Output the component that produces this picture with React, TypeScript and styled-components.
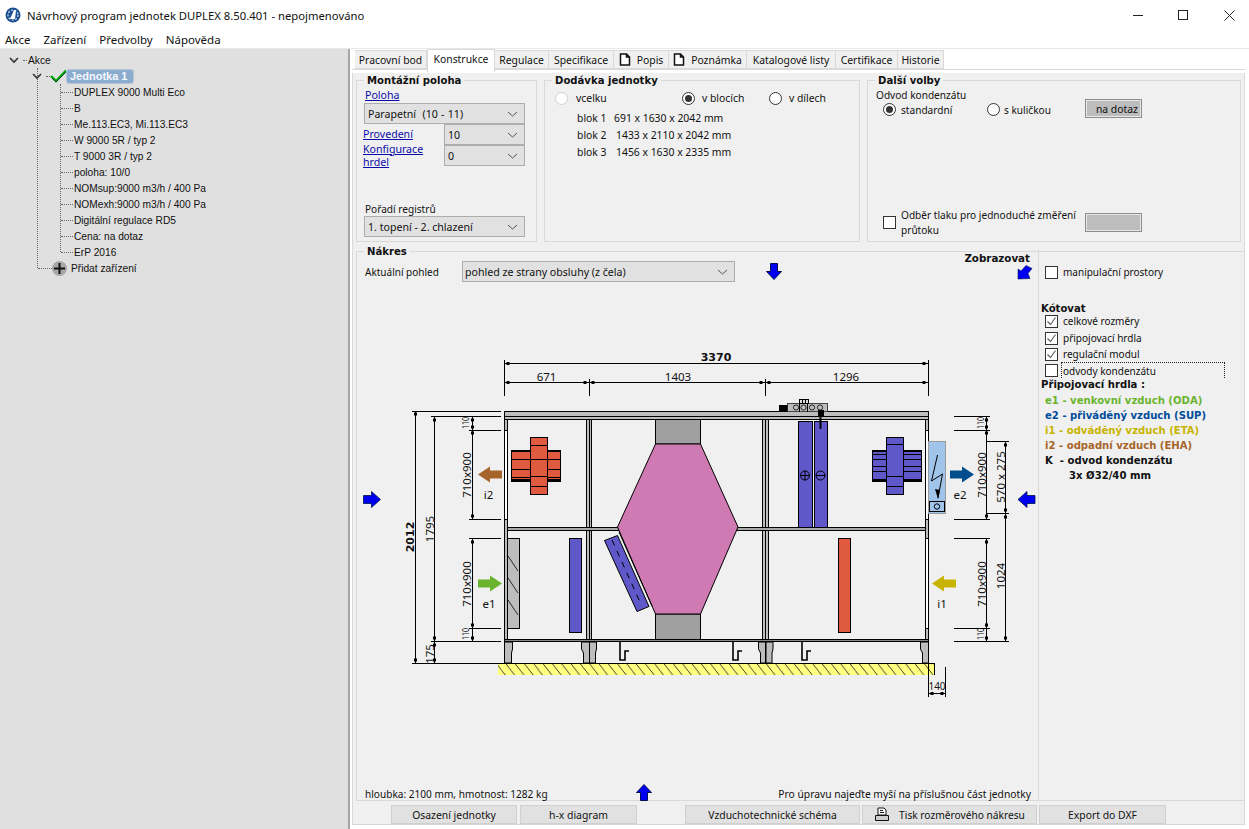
import React from "react";
import styled, { createGlobalStyle } from "styled-components";

const Global = createGlobalStyle`
  html, body { margin: 0; padding: 0; background: #fff; overflow: hidden; }
  body { font-family: "Noto Sans", "Liberation Sans", sans-serif; font-size: 11px; color: #000; }
  * { box-sizing: border-box; }
`;

const Win = styled.div`width: 1249px; height: 829px; display: flex; flex-direction: column; background: #fff; overflow: hidden;`;
const TitleBar = styled.div`height: 30px; display: flex; align-items: center; padding-left: 5px; flex: none; margin-right: -3px;`;
const TitleText = styled.span`font-size: 11.27px; margin-left: 6px; color: #111; flex: 1;`;
const WinBtn = styled.div`width: 45.5px; height: 30px; display: flex; align-items: center; justify-content: center;`;
const MenuBar = styled.div`height: 19px; display: flex; padding-left: 5px; gap: 13px; font-size: 11.5px; align-items: center; flex: none; border-bottom: 1px solid #e8e8e8;`;
const MenuItem = styled.span`color: #111;`;
const Body = styled.div`flex: 1; display: flex; min-height: 0;`;

const Sidebar = styled.div`width: 350px; flex: none; background: #e0e0e0; border-right: 2px solid #a6a6a6; padding-top: 3px; font-family: "Liberation Sans", sans-serif; font-size: 10.2px; color: #111;`;
const TreeRow = styled.div<{ $pl: number }>`height: 16px; display: flex; align-items: center; padding-left: ${p => p.$pl}px; position: relative;`;
const Outer = styled.div`position: relative;
  &::before { content: ""; position: absolute; left: 37px; top: 0; bottom: 8px; border-left: 1px dotted #666; }
`;
const Children = styled.div`position: relative;
  &::before { content: ""; position: absolute; left: 60px; top: 0; bottom: 8px; border-left: 1px dotted #666; }
`;
const Leaf = styled(TreeRow)`
  &::before { content: ""; position: absolute; left: 61px; width: 12px; top: 8px; border-top: 1px dotted #666; }
`;
const AddRow = styled(TreeRow)`
  &::before { content: ""; position: absolute; left: 38px; width: 14px; top: 8px; border-top: 1px dotted #666; }
`;
const Chip = styled.span`background: #8caccd; color: #f4f8ff; font-weight: 700; font-size: 11px; border: 1px solid #b4c6da; border-radius: 3px; padding: 0 3px; height: 15px; line-height: 13px; margin-left: -1px; width: 68px; white-space: nowrap;`;
const Dots = styled.span`width: 4px; border-top: 1px dotted #666; margin: 0 1px 0 4px;`;
const PlusBall = styled.span`width: 15px; height: 15px; border-radius: 50%; background: #a8a8a8; margin-right: 4px; display: flex; align-items: center; justify-content: center; position: relative; z-index: 1;`;

const Right = styled.div`flex: 1; min-width: 0; display: flex; flex-direction: column; padding: 0 4px 4px 2px;`;
const TabStrip = styled.div`height: 21px; display: flex; align-items: flex-end; padding-left: 3px; border-bottom: 1px solid #d9d9d9; flex: none; margin-top: 0; position: relative;`;
const Tab = styled.div<{ $w: number; $active?: boolean }>`
  width: ${p => p.$w}px;
  height: ${p => (p.$active ? 23 : 19)}px;
  margin-bottom: ${p => (p.$active ? -3 : 0)}px;
  background: ${p => (p.$active ? "#fff" : "#f0f0f0")};
  border: 1px solid #d9d9d9;
  border-left-width: ${p => (p.$active ? 1 : 0)}px;
  border-bottom: ${p => (p.$active ? "none" : "1px solid #d9d9d9")};
  display: flex; align-items: center; justify-content: center; gap: 6px;
  font-size: 10.4px; color: #111; position: relative; z-index: 1; white-space: nowrap;
  padding-bottom: ${p => (p.$active ? 5 : 0)}px;
`;
const Panel = styled.div`flex: 1; margin-top: 3px; background: #f0f0f0; border: 1px solid #d9d9d9; border-top: none; padding: 0 0 0 3px; display: flex; flex-direction: column; min-height: 0; font-size: 10.6px; color: #111;`;
const TopRow = styled.div`display: flex; height: 170px; gap: 7px; flex: none; padding-right: 3px;`;
const Group = styled.fieldset<{ $w?: number }>`
  margin: 0; min-width: 0; padding: 0; border: 1px solid #d9d9d9;
  ${p => (p.$w ? `width: ${p.$w}px; flex: none;` : "flex: 1;")}
  height: 169px; display: block;
`;
const Legend = styled.legend`
  margin-left: 7px; padding: 0 3px; font-family: "DejaVu Sans", sans-serif; font-weight: 700; font-size: 10.1px; line-height: 14px; color: #111; transform: translateY(1px);
`;
const MountBody = styled.div`padding: 1px 11px 0 7px; display: flex; flex-direction: column;`;
const Link = styled.a`color: #0b0ba8; text-decoration: underline; line-height: 13px; display: block;`;
const LinkRow = styled.div`height: 15px; padding-left: 1px; display: flex; align-items: center;`;
const Select = styled.div<{ $w?: number }>`
  height: 21px; background: #e1e1e1; border: 1px solid #adadad; display: flex; align-items: center; justify-content: space-between; padding: 0 6px 0 3px;
  ${p => (p.$w ? `width: ${p.$w}px; flex: none;` : "")}
  white-space: pre;
`;
const ParapetSelect = styled(Select)`word-spacing: 0.5px;`;
const Pair = styled.div`display: flex; align-items: center; height: 21px; margin-left: -1px; justify-content: space-between;`;
const PlainLabel = styled.div<{ $mt?: number }>`margin-top: ${p => p.$mt ?? 0}px; height: 14px; line-height: 14px; padding-left: 1px; font-size: 10.1px;`;

const DeliveryBody = styled.div`padding: 3px 0 0 10px; font-size: 10.4px;`;
const RadioRow = styled.div`display: flex; align-items: center; height: 16px;`;
const Radio = styled.span<{ $on?: boolean; $off?: boolean; $ml?: number }>`
  width: 13px; height: 13px; border-radius: 50%; flex: none; background: #fff; position: relative;
  margin-left: ${p => p.$ml ?? 0}px;
  border: 1px solid ${p => (p.$off ? "#d0d0d0" : "#333")};
  display: flex; align-items: center; justify-content: center;
  &::after { content: ""; width: 7px; height: 7px; border-radius: 50%; background: ${p => (p.$on ? "#333" : "transparent")}; }
`;
const RadioLabel = styled.span<{ $ml: number; $w?: number }>`margin-left: ${p => p.$ml}px; ${p => (p.$w ? `width: ${p.$w}px;` : "")}`;
const Blocks = styled.div`margin: 5px 0 0 22px; display: flex; flex-direction: column; gap: 3px;`;
const BlockRow = styled.div`height: 14px; line-height: 14px; display: flex;`;
const BlockName = styled.span`width: 37px;`;
const BlockSize = styled.span<{ $ml?: number }>`margin-left: ${p => p.$ml ?? 0}px;`;

const MoreBody = styled.div`padding: 1px 0 0 7px; font-size: 10.1px;`;
const Row = styled.div<{ $ml?: number; $mt?: number }>`display: flex; align-items: center; margin-left: ${p => p.$ml ?? 0}px; margin-top: ${p => p.$mt ?? 0}px;`;
const PriceBox = styled.div<{ $top?: number }>`width: 57px; height: 19px; flex: none; background: #bdbdbd; border: 1px solid #8c8c8c; outline: 1px solid #e8e8e8; outline-offset: -2px; margin-top: ${p => p.$top ?? 0}px; display: flex; align-items: center; justify-content: flex-end; padding-right: 3px; font-size: 10.4px;`;
const Box = styled.span<{ $ml?: number }>`width: 13px; height: 13px; flex: none; background: #fff; border: 1px solid #333; margin-left: ${p => p.$ml ?? 0}px; display: flex; align-items: center; justify-content: center;`;
const TwoLine = styled.span`margin-left: 5px; line-height: 15px; width: 184px; padding-top: 2px;`;

const DrawGroup = styled.fieldset`margin: 0; padding: 0; border: 1px solid #d9d9d9; flex: none; height: 557px; min-width: 0; margin-top: 1px; margin-right: -1px;`;
const DrawGrid = styled.div`display: flex; height: 543px;`;
const DrawLeft = styled.div`width: 681px; flex: none; display: flex; flex-direction: column;`;
const HeadRow = styled.div`display: flex; align-items: center; height: 21px; margin-top: 3px; padding-left: 8px;`;
const HeadLabel = styled.span`width: 97px; font-size: 10px;`;
const ViewSelect = styled(Select)`width: 273px; background: #e1e1e1; padding-left: 2px;`;
const ArrowSlot = styled.span<{ $ml: number }>`margin-left: ${p => p.$ml}px; display: flex; margin-top: -1px;`;
const ShowBlock = styled.div`margin-left: auto; margin-top: -12px; display: flex; flex-direction: column; align-items: flex-end; padding-right: 6px;`;
const ShowTitle = styled.span`font-family: "DejaVu Sans", sans-serif; font-weight: 700; font-size: 10.3px; line-height: 14px; margin-right: 2px;`;
const DiagSlot = styled.span`display: flex; margin-right: -1px;`;
const DrawSvg = styled.svg`flex: none; display: block; margin-top: 7px;`;
const FootRow = styled.div`height: 20px; display: flex; align-items: center; padding: 0 7px 0 8px; font-size: 10.1px;`;
const FootLeft = styled.span`width: 271px; flex: none; padding-top: 3px;`;
const FootRight = styled.span`margin-left: auto; font-size: 10.3px; padding-top: 3px;`;
const DrawRight = styled.div`flex: 1; border-left: 1px solid #d9d9d9; margin-top: -8px; padding: 14px 0 0 6px; font-size: 10px;`;
const CheckRow = styled.div<{ $mt?: number }>`display: flex; align-items: center; height: 16px; margin-top: ${p => p.$mt ?? 0}px; gap: 5px;`;
const Focus = styled.span`border: 1px dotted #222; border-bottom: none; width: 164px; height: 16px; line-height: 16px; margin-left: -2px; padding-left: 1px;`;
const BoldHead = styled.div<{ $mt?: number }>`font-family: "DejaVu Sans", sans-serif; font-weight: 700; font-size: 10.1px; line-height: 15px; margin-left: -4px; margin-top: ${p => p.$mt ?? 0}px;`;
const Key = styled.div<{ $c: string; $ml?: number; $mt?: number }>`font-family: "DejaVu Sans", sans-serif; font-weight: 700; font-size: 10.1px; line-height: 15px; color: ${p => p.$c}; margin-left: ${p => p.$ml ?? 0}px; margin-top: ${p => p.$mt ?? 0}px; white-space: pre;`;

const ButtonRow = styled.div`display: flex; height: 20px; margin-top: 4px; padding-left: 35px; font-size: 10.4px;`;
const Button = styled.div<{ $w: number; $mr?: number }>`width: ${p => p.$w}px; margin-right: ${p => p.$mr ?? 0}px; background: #e1e1e1; border: 1px solid #d0d0d0; display: flex; align-items: center; justify-content: center; gap: 9px; flex: none;`;
const PrintLabel = styled.span`font-size: 10.2px;`;

const Chevron = () => (
  <svg width="11" height="6" viewBox="0 0 11 6"><path d="M1 1l4.5 4L10 1" fill="none" stroke="#555" strokeWidth="1" /></svg>
);
const Expand = () => (
  <svg width="10" height="7" viewBox="0 0 10 7"><path d="M1 1l4 4 4-4" fill="none" stroke="#333" strokeWidth="1.6" /></svg>
);
const DocIcon = () => (
  <svg width="12" height="13" viewBox="0 0 12 13"><path d="M1.5 1h6l3 3v8h-9z M7.5 1v3h3" fill="#fff" stroke="#111" strokeWidth="1.5" /></svg>
);
const TinyCheck = () => (
  <svg width="11" height="11" viewBox="0 0 11 11"><path d="M1.5 5.5l3 3 5-7" fill="none" stroke="#555" strokeWidth="1.1" /></svg>
);
const NavArrow = ({ dir }: { dir: "up" | "down" }) => (
  <svg width="16" height="17" viewBox="0 0 16 17">
    <path d={dir === "down" ? "M4.5.5h7v8h4L8 16.5.5 8.5h4z" : "M4.5 16.5h7v-8h4L8 .5.5 8.5h4z"} fill="#0000f0" stroke="#001050" strokeWidth="1" />
  </svg>
);
const DiagArrow = () => (
  <svg width="16" height="15" viewBox="0 0 16 15">
    <path d="M1 14V4l3 2 5-5.500 6 3-4 5 2 5z" fill="#0000f0" stroke="#001050" strokeWidth=".6" />
  </svg>
);

const K = "#000";
const GRAY = "#bdbdbd";
const H = ({ x1, x2, y }: { x1: number; x2: number; y: number }) => <line x1={x1} x2={x2} y1={y} y2={y} stroke={K} strokeWidth="1" shapeRendering="crispEdges" />;
const V = ({ x, y1, y2 }: { x: number; y1: number; y2: number }) => <line x1={x} x2={x} y1={y1} y2={y2} stroke={K} strokeWidth="1" shapeRendering="crispEdges" />;
const Dot = ({ x, y }: { x: number; y: number }) => <rect x={x - 1.5} y={y - 1.5} width="3" height="3" fill={K} />;
const DimT = ({ x, y, t, rot, bold, size = 11.5, sx = 1 }: { x: number; y: number; t: string; rot?: boolean; bold?: boolean; size?: number; sx?: number }) => (
  <text
    transform={`translate(${x} ${y})${rot ? " rotate(-90)" : ""} scale(${sx} 1)`}
    textAnchor="middle"
    dominantBaseline="central"
    fontFamily={bold ? "'DejaVu Sans', sans-serif" : "'Noto Sans', sans-serif"}
    fontWeight={bold ? 700 : 400}
    fontSize={size}
    fill="#111"
  >{t}</text>
);
const Wall = ({ x, y1, y2, w = 3, fill = GRAY }: { x: number; y1: number; y2: number; w?: number; fill?: string }) => (
  <rect x={x} y={y1} width={w} height={y2 - y1} fill={fill} stroke={K} strokeWidth="1" shapeRendering="crispEdges" />
);
const Leg = ({ x, w, mirror }: { x: number; w: number; mirror?: boolean }) => (
  <path
    d={mirror
      ? `M${x} 643H${x + w}V664H${x + 2}V654L${x} 650Z`
      : `M${x} 643H${x + w}V650L${x + w - 1} 654V664H${x}Z`}
    fill={GRAY} stroke={K} strokeWidth="1"
  />
);
const Siphon = ({ x }: { x: number }) => (
  <path d={`M${x} 643V661H${x + 5}V652H${x + 9}`} fill="none" stroke={K} strokeWidth="1.6" />
);
const ArrowShape = ({ x, y, left, c }: { x: number; y: number; left?: boolean; c: string }) => (
  <path d={left
    ? `M${x} ${y}L${x + 12} ${y - 8}V${y - 4}H${x + 24}V${y + 4}H${x + 12}V${y + 8}Z`
    : `M${x + 24} ${y}L${x + 12} ${y - 8}V${y - 4}H${x}V${y + 4}H${x + 12}V${y + 8}Z`} fill={c} />
);
const Fan = ({ cx1, cx2, sx1, sx2, fill, cl, sl }: { cx1: number; cx2: number; sx1: number; sx2: number; fill: string; cl: number[]; sl: number[] }) => (
  <g stroke={K} strokeWidth="1" shapeRendering="crispEdges">
    <rect x={sx1} y={451} width={sx2 - sx1} height={31} fill={fill} />
    <rect x={sx1} y={451} width={sx2 - sx1} height={1.5} fill={K} />
    <rect x={sx1} y={480.5} width={sx2 - sx1} height={1.5} fill={K} />
    {sl.map(y => <line key={y} x1={sx1} x2={sx2} y1={y} y2={y} />)}
    <rect x={cx1} y={438.5} width={cx2 - cx1} height={57} fill={fill} />
    {cl.map(y => <line key={y} x1={cx1} x2={cx2} y1={y} y2={y} />)}
  </g>
);

const Drawing = () => (
  <DrawSvg width={681} height={494} viewBox="357 290 681 494">
    <defs>
      <pattern id="hatch" width="9.3" height="12" patternUnits="userSpaceOnUse">
        <path d="M0 0L9.3 12" stroke="#222" strokeWidth=".9" />
      </pattern>
    </defs>

    <rect x="498" y="664" width="437" height="12" fill="#ffff80" />
    <rect x="498" y="664" width="437" height="12" fill="url(#hatch)" />
    <V x={934.5} y1={664} y2={676} />

    <Wall x={504.5} y1={420} y2={431} />
    <Wall x={504.5} y1={520} y2={641} />
    <rect x="504.5" y="431" width="3" height="89" fill="#fff" stroke={K} strokeWidth="1" shapeRendering="crispEdges" />
    <Wall x={925.5} y1={420} y2={431} />
    <rect x="925.5" y="431" width="3" height="89" fill="#fff" stroke={K} strokeWidth="1" shapeRendering="crispEdges" />
    <Wall x={925.5} y1={520} y2={539} />
    <rect x="925.5" y="539" width="3" height="90" fill="#fff" stroke={K} strokeWidth="1" shapeRendering="crispEdges" />
    <Wall x={925.5} y1={629} y2={641} />

    <Wall x={586.5} y1={420} y2={641} />
    <Wall x={589.5} y1={420} y2={641} w={2} />
    <Wall x={762.5} y1={420} y2={641} />
    <Wall x={765.5} y1={420} y2={641} />

    <rect x="507.5" y="528.5" width="418" height="3" fill="#a8a8a8" stroke={K} strokeWidth="1" shapeRendering="crispEdges" />
    <rect x="504.5" y="412.5" width="424" height="5" fill={GRAY} stroke={K} strokeWidth="1" shapeRendering="crispEdges" />
    <rect x="504.5" y="417.5" width="424" height="3" fill={GRAY} stroke={K} strokeWidth="1" shapeRendering="crispEdges" />
    <rect x="504.5" y="640.5" width="424" height="2" fill="#888" stroke={K} strokeWidth="1" shapeRendering="crispEdges" />

    <rect x="655.5" y="420.5" width="45" height="24.500" fill="#a0a0a0" stroke={K} strokeWidth="1" />
    <rect x="655.5" y="615" width="45" height="25.500" fill="#a0a0a0" stroke={K} strokeWidth="1" />
    <path d="M655.5 445H700.500L738 528L700.500 615H655.500L617.500 528Z" fill="#d07ab3" stroke={K} strokeWidth="1" />
    <polygon points="604.5,541.5 617.5,536.5 649,607.5 637,612.5" fill="#5e58c8" stroke={K} strokeWidth="1" />
    <line x1="612" y1="541" x2="640" y2="603" stroke={K} strokeWidth="1" strokeDasharray="6 6" />
    <line x1="619" y1="533" x2="652" y2="607" stroke={K} strokeWidth="1" />

    <Leg x={504.5} w={8} />
    <Leg x={581.5} w={8} mirror />
    <Leg x={589.5} w={7} />
    <Leg x={758.5} w={7} mirror />
    <Leg x={766} w={7} />
    <Leg x={920.5} w={8} mirror />
    <Siphon x={620} />
    <Siphon x={733} />
    <Siphon x={802} />
    <H x1={412} x2={935} y={664.5} />

    <rect x="507.5" y="539.5" width="12" height="90" fill={GRAY} stroke={K} strokeWidth="1" shapeRendering="crispEdges" />
    <path d="M508 557L518 572M508 579L518 594M508 601L518 616" stroke={K} strokeWidth=".8" />
    <rect x="569.5" y="539.5" width="12" height="94" fill="#5e58c8" stroke={K} strokeWidth="1" shapeRendering="crispEdges" />
    <rect x="838.5" y="539.5" width="12" height="94" fill="#e05a3f" stroke={K} strokeWidth="1" shapeRendering="crispEdges" />
    <rect x="798.5" y="422.5" width="14" height="106" fill="#5e58c8" stroke={K} strokeWidth="1" shapeRendering="crispEdges" />
    <rect x="814.5" y="422.5" width="13" height="106" fill="#5e58c8" stroke={K} strokeWidth="1" shapeRendering="crispEdges" />
    <circle cx="805" cy="476.5" r="4.5" fill="none" stroke={K} />
    <path d="M800 476.5h10M805 471.5v10" stroke={K} />
    <circle cx="820.5" cy="476.5" r="4.5" fill="none" stroke={K} />
    <path d="M816 476.5h9" stroke={K} />

    <Fan cx1={530.5} cx2={547.5} sx1={511.5} sx2={560.5} fill="#e05a3f" cl={[446.5, 460.5, 477.5, 487.5]} sl={[460.5, 470.5, 478.5]} />
    <Fan cx1={886.5} cx2={903.5} sx1={872.5} sx2={921.5} fill="#5e58c8" cl={[445.5, 477.5, 487.5]} sl={[455.5, 460.5, 467.5, 472.5]} />

    <rect x="787.5" y="404.5" width="40" height="8" fill={GRAY} stroke="#444" strokeWidth="1" shapeRendering="crispEdges" />
    <rect x="779" y="406" width="8.5" height="6.5" fill={K} />
    <rect x="799.5" y="400.5" width="9" height="4" fill="#ddd" stroke={K} strokeWidth="1" shapeRendering="crispEdges" />
    <path d="M802.5 400.5v4M805.5 400.5v4M799.5 404.5v8M807.5 404.5v8" stroke={K} shapeRendering="crispEdges" />
    <circle cx="796" cy="408.5" r="2.6" fill="none" stroke={K} strokeWidth=".8" />
    <circle cx="803.5" cy="408.5" r="2.6" fill="none" stroke={K} strokeWidth=".8" />
    <circle cx="812" cy="408.5" r="2.6" fill="none" stroke={K} strokeWidth=".8" />
    <circle cx="820" cy="408.5" r="2.6" fill="none" stroke={K} strokeWidth=".8" />
    <rect x="818" y="411" width="6" height="7" fill={K} />
    <rect x="819.5" y="418" width="2" height="12" fill={K} />

    <rect x="928.5" y="442.5" width="17" height="72" fill="#a0c4ea" stroke="#9a9a9a" strokeWidth="1" shapeRendering="crispEdges" />
    <rect x="929.5" y="502.5" width="15" height="9.5" fill="#a0c4ea" stroke={K} strokeWidth="1" shapeRendering="crispEdges" />
    <circle cx="937" cy="507.5" r="2.7" fill="none" stroke={K} />
    <path d="M937.5 456L931.5 482L942.5 475L938 499" fill="none" stroke={K} />
    <path d="M935 490L938 500L940 491Z" fill={K} />

    <H x1={505} x2={928} y={364.5} />
    <H x1={505} x2={928} y={383.5} />
    <V x={504.5} y1={361} y2={397} />
    <V x={928.5} y1={361} y2={397} />
    <V x={589.5} y1={380} y2={397} />
    <V x={765.5} y1={380} y2={397} />
    {[508, 924].map(x => <Dot key={x} x={x} y={364.5} />)}
    {[508, 585, 593, 761, 769, 924].map(x => <Dot key={x} x={x} y={383.5} />)}
    <DimT x={716} y={358} t="3370" bold size={11} />
    <DimT x={546.5} y={377} t="671" />
    <DimT x={678} y={377} t="1403" />
    <DimT x={846} y={377} t="1296" />

    <V x={415.5} y1={412} y2={664} />
    <H x1={412} x2={501} y={412.5} />
    <V x={434.5} y1={417} y2={664} />
    <H x1={431} x2={501} y={417.5} />
    <V x={472.5} y1={417} y2={520} />
    <V x={472.5} y1={539} y2={642} />
    <H x1={469} x2={501} y={431.5} />
    <H x1={469} x2={501} y={520.5} />
    <H x1={469} x2={501} y={539.5} />
    <H x1={469} x2={501} y={629.5} />
    <H x1={431} x2={501} y={642.5} />
    {[[472.5, 421], [472.5, 428], [472.5, 434], [472.5, 517], [472.5, 543], [472.5, 626], [472.5, 639], [434.5, 421], [434.5, 639], [434.5, 646], [415.5, 415], [415.5, 661], [434.5, 661]].map(([x, y]) => <Dot key={`${x}-${y}`} x={x} y={y} />)}
    <DimT x={410} y={538} t="2012" rot bold size={11} />
    <DimT x={429} y={530} t="1795" rot />
    <DimT x={429} y={655} t="175" rot />
    <DimT x={466.5} y={476} t="710x900" rot />
    <DimT x={466.5} y={585} t="710x900" rot />
    <DimT x={465.5} y={424} t="110" rot size={9.5} sx={.75} />
    <DimT x={465.5} y={635} t="110" rot size={9.5} sx={.75} />

    <V x={986.5} y1={417} y2={520} />
    <V x={986.5} y1={539} y2={642} />
    <H x1={954} x2={990} y={417.5} />
    <H x1={954} x2={990} y={431.5} />
    <H x1={954} x2={990} y={520.5} />
    <H x1={954} x2={990} y={539.5} />
    <H x1={954} x2={990} y={629.5} />
    <H x1={954} x2={1009} y={642.5} />
    <H x1={987} x2={1009} y={442.5} />
    <H x1={987} x2={1009} y={514.5} />
    <V x={1005.5} y1={442} y2={642} />
    {[[986.5, 421], [986.5, 428], [986.5, 434], [986.5, 517], [986.5, 543], [986.5, 626], [986.5, 639], [1005.5, 446], [1005.5, 511], [1005.5, 518], [1005.5, 639]].map(([x, y]) => <Dot key={`${x}-${y}`} x={x} y={y} />)}
    <DimT x={980} y={424} t="110" rot size={9.5} sx={.75} />
    <DimT x={980} y={635} t="110" rot size={9.5} sx={.75} />
    <DimT x={981} y={476} t="710x900" rot />
    <DimT x={981} y={585} t="710x900" rot />
    <DimT x={1000} y={478} t="570 x 275" rot />
    <DimT x={1000.5} y={577} t="1024" rot />

    <V x={928.5} y1={664} y2={698} />
    <V x={945.5} y1={668} y2={698} />
    <H x1={928} x2={946} y={694.5} />
    <Dot x={932} y={694.5} />
    <Dot x={942} y={694.5} />
    <DimT x={937} y={686.5} t="140" size={10.5} sx={.95} />

    <ArrowShape x={478} y={475.5} left c="#a6652a" />
    <ArrowShape x={478} y={584.5} c="#6ab42d" />
    <ArrowShape x={950} y={475.5} c="#004c8c" />
    <ArrowShape x={932} y={584.5} left c="#c8b400" />
    <DimT x={488.5} y={495} t="i2" />
    <DimT x={489} y={604} t="e1" />
    <DimT x={960} y={495} t="e2" />
    <DimT x={942} y={604} t="i1" />

    <path d="M363.5 496.5h8v-4l9 8-9 8v-4h-8z" fill="#0000f0" stroke="#001050" strokeWidth=".8" />
    <path d="M1035 496.5h-8v-4l-9 8 9 8v-4h8z" fill="#0000f0" stroke="#001050" strokeWidth=".8" />
  </DrawSvg>
);

const leaves = ["DUPLEX 9000 Multi Eco", "B", "Me.113.EC3, Mi.113.EC3", "W 9000 5R / typ 2", "T 9000 3R / typ 2", "poloha: 10/0", "NOMsup:9000 m3/h / 400 Pa", "NOMexh:9000 m3/h / 400 Pa", "Digitální regulace RD5", "Cena: na dotaz", "ErP 2016"];
const tabs = [
  { t: "Pracovní bod", w: 72 }, { t: "Konstrukce", w: 68, active: true }, { t: "Regulace", w: 54 }, { t: "Specifikace", w: 65 },
  { t: "Popis", w: 55, doc: true }, { t: "Poznámka", w: 78, doc: true }, { t: "Katalogové listy", w: 89 }, { t: "Certifikace", w: 62 }, { t: "Historie", w: 46 },
];

export default function App() {
  return (
    <Win>
      <Global />
      <TitleBar>
        <svg width="16" height="16" viewBox="0 0 16 16">
          <circle cx="8" cy="8" r="7.5" fill="#1c4f8f" />
          <circle cx="8" cy="8" r="5" fill="none" stroke="#cfe0f2" strokeWidth="1.2" strokeDasharray="2 1.5" />
          <path d="M5 12L9 3h2l-1 9z" fill="#fff" />
        </svg>
        <TitleText>Návrhový program jednotek DUPLEX 8.50.401 - nepojmenováno</TitleText>
        <WinBtn><svg width="11" height="11" viewBox="0 0 11 11"><path d="M0 5.5h10" stroke="#222" /></svg></WinBtn>
        <WinBtn><svg width="11" height="11" viewBox="0 0 11 11"><rect x=".5" y=".5" width="9" height="9" fill="none" stroke="#222" /></svg></WinBtn>
        <WinBtn><svg width="11" height="11" viewBox="0 0 11 11"><path d="M.5.5l10 10M10.5.5l-10 10" stroke="#222" /></svg></WinBtn>
      </TitleBar>
      <MenuBar>
        <MenuItem>Akce</MenuItem><MenuItem>Zařízení</MenuItem><MenuItem>Předvolby</MenuItem><MenuItem>Nápověda</MenuItem>
      </MenuBar>
      <Body>
        <Sidebar>
          <TreeRow $pl={9}><Expand /><Dots />Akce</TreeRow>
          <Outer>
            <TreeRow $pl={32}>
              <Expand /><Dots />
              <svg width="17" height="14" viewBox="0 0 17 14" style={{ marginLeft: -1 }}><path d="M1 7l5 5L16 1.5" fill="none" stroke="#0a0" strokeWidth="2.4" /><path d="M2 9l4 4L16 3" fill="none" stroke="#043" strokeWidth="1" /></svg>
              <Chip>Jednotka 1</Chip>
            </TreeRow>
            <Children>
              {leaves.map(l => <Leaf key={l} $pl={74}>{l}</Leaf>)}
            </Children>
            <AddRow $pl={52}>
              <PlusBall><svg width="11" height="11" viewBox="0 0 11 11"><path d="M0 5.5h11M5.5 0v11" stroke="#111" strokeWidth="2" /></svg></PlusBall>
              Přidat zařízení
            </AddRow>
          </Outer>
        </Sidebar>
        <Right>
          <TabStrip>
            {tabs.map(t => (
              <Tab key={t.t} $w={t.w} $active={t.active}>{t.doc && <DocIcon />}{t.t}</Tab>
            ))}
          </TabStrip>
          <Panel>
            <TopRow>
              <Group $w={181}>
                <Legend>Montážní poloha</Legend>
                <MountBody>
                  <LinkRow><Link>Poloha</Link></LinkRow>
                  <ParapetSelect>Parapetní  (10 - 11)<Chevron /></ParapetSelect>
                  <Pair><Link>Provedení</Link><Select $w={81}>10<Chevron /></Select></Pair>
                  <Pair><Link>Konfigurace <br />hrdel</Link><Select $w={81}>0<Chevron /></Select></Pair>
                  <PlainLabel $mt={36}>Pořadí registrů</PlainLabel>
                  <Select>1. topení - 2. chlazení<Chevron /></Select>
                </MountBody>
              </Group>
              <Group $w={316}>
                <Legend>Dodávka jednotky</Legend>
                <DeliveryBody>
                  <RadioRow>
                    <Radio $off />
                    <RadioLabel $ml={8} $w={106}>vcelku</RadioLabel>
                    <Radio $on />
                    <RadioLabel $ml={7} $w={67}>v blocích</RadioLabel>
                    <Radio />
                    <RadioLabel $ml={7}>v dílech</RadioLabel>
                  </RadioRow>
                  <Blocks>
                    <BlockRow><BlockName>blok 1</BlockName><BlockSize>691 x 1630 x 2042 mm</BlockSize></BlockRow>
                    <BlockRow><BlockName>blok 2</BlockName><BlockSize $ml={2}>1433 x 2110 x 2042 mm</BlockSize></BlockRow>
                    <BlockRow><BlockName>blok 3</BlockName><BlockSize $ml={2}>1456 x 1630 x 2335 mm</BlockSize></BlockRow>
                  </Blocks>
                </DeliveryBody>
              </Group>
              <Group>
                <Legend>Další volby</Legend>
                <MoreBody>
                  <PlainLabel>Odvod kondenzátu</PlainLabel>
                  <Row $ml={8} $mt={-1}>
                    <Radio $on />
                    <RadioLabel $ml={5} $w={86}>standardní</RadioLabel>
                    <Radio />
                    <RadioLabel $ml={4} $w={81}>s kuličkou</RadioLabel>
                    <PriceBox $top={-2}>na dotaz</PriceBox>
                  </Row>
                  <Row $ml={8} $mt={88}>
                    <Box />
                    <TwoLine>Odběr tlaku pro jednoduché změření průtoku</TwoLine>
                    <PriceBox />
                  </Row>
                </MoreBody>
              </Group>
            </TopRow>
            <DrawGroup>
              <Legend>Nákres</Legend>
              <DrawGrid>
                <DrawLeft>
                  <HeadRow>
                    <HeadLabel>Aktuální pohled</HeadLabel>
                    <ViewSelect>pohled ze strany obsluhy (z čela)<Chevron /></ViewSelect>
                    <ArrowSlot $ml={31}><NavArrow dir="down" /></ArrowSlot>
                    <ShowBlock>
                      <ShowTitle>Zobrazovat</ShowTitle>
                      <DiagSlot><DiagArrow /></DiagSlot>
                    </ShowBlock>
                  </HeadRow>
                  <Drawing />
                  <FootRow>
                    <FootLeft>hloubka: 2100 mm, hmotnost: 1282 kg</FootLeft>
                    <NavArrow dir="up" />
                    <FootRight>Pro úpravu najeďte myší na příslušnou část jednotky</FootRight>
                  </FootRow>
                </DrawLeft>
                <DrawRight>
                  <CheckRow><Box />manipulační prostory</CheckRow>
                  <BoldHead $mt={21}>Kótovat</BoldHead>
                  <CheckRow $mt={-3}><Box><TinyCheck /></Box>celkové rozměry</CheckRow>
                  <CheckRow $mt={1}><Box><TinyCheck /></Box>připojovací hrdla</CheckRow>
                  <CheckRow><Box><TinyCheck /></Box>regulační modul</CheckRow>
                  <CheckRow><Box /><Focus>odvody kondenzátu</Focus></CheckRow>
                  <BoldHead $mt={-1}>Připojovací hrdla :</BoldHead>
                  <Key $c="#6ab42d" $mt={1}>e1 - venkovní vzduch (ODA)</Key>
                  <Key $c="#004c9a">e2 - přiváděný vzduch (SUP)</Key>
                  <Key $c="#c8b400">i1 - odváděný vzduch (ETA)</Key>
                  <Key $c="#a6652a">i2 - odpadní vzduch (EHA)</Key>
                  <Key $c="#111">K  - odvod kondenzátu</Key>
                  <Key $c="#111" $ml={24}>3x Ø32/40 mm</Key>
                </DrawRight>
              </DrawGrid>
            </DrawGroup>
            <ButtonRow>
              <Button $w={126} $mr={3}>Osazení jednotky</Button>
              <Button $w={117} $mr={48}>h-x diagram</Button>
              <Button $w={175} $mr={2}>Vzduchotechnické schéma</Button>
              <Button $w={175} $mr={2}>
                <svg width="16" height="15" viewBox="0 0 16 15"><path d="M4 1h6l2 2v5H4z" fill="#fff" stroke="#111" /><path d="M1.5 8.500h13v5h-13z" fill="#ccc" stroke="#111" /><path d="M6 3.500h3M6 5.500h4" stroke="#111" /></svg>
                <PrintLabel>Tisk rozměrového nákresu</PrintLabel>
              </Button>
              <Button $w={127}>Export do DXF</Button>
            </ButtonRow>
          </Panel>
        </Right>
      </Body>
    </Win>
  );
}
